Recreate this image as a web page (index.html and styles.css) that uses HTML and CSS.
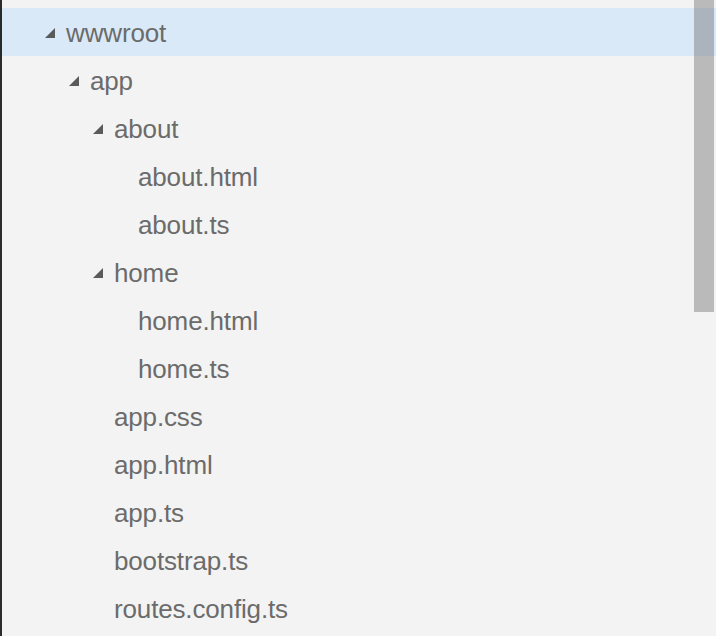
FILE: index.html
```html
<!DOCTYPE html>
<html>
<head>
<meta charset="utf-8">
<link rel="stylesheet" href="styles.css">
</head>
<body>
<div class="explorer">
  <div class="tree">
    <div class="row selected lvl0"><span class="twistie"><svg viewBox="0 0 10 10" width="10" height="10"><polygon points="10,0 10,10 0,10"/></svg></span><span class="label">wwwroot</span></div>
    <div class="row lvl1"><span class="twistie"><svg viewBox="0 0 10 10" width="10" height="10"><polygon points="10,0 10,10 0,10"/></svg></span><span class="label">app</span></div>
    <div class="row lvl2"><span class="twistie"><svg viewBox="0 0 10 10" width="10" height="10"><polygon points="10,0 10,10 0,10"/></svg></span><span class="label">about</span></div>
    <div class="row lvl3"><span class="twistie"></span><span class="label">about.html</span></div>
    <div class="row lvl3"><span class="twistie"></span><span class="label">about.ts</span></div>
    <div class="row lvl2"><span class="twistie"><svg viewBox="0 0 10 10" width="10" height="10"><polygon points="10,0 10,10 0,10"/></svg></span><span class="label">home</span></div>
    <div class="row lvl3"><span class="twistie"></span><span class="label">home.html</span></div>
    <div class="row lvl3"><span class="twistie"></span><span class="label">home.ts</span></div>
    <div class="row lvl2"><span class="twistie"></span><span class="label">app.css</span></div>
    <div class="row lvl2"><span class="twistie"></span><span class="label">app.html</span></div>
    <div class="row lvl2"><span class="twistie"></span><span class="label">app.ts</span></div>
    <div class="row lvl2"><span class="twistie"></span><span class="label">bootstrap.ts</span></div>
    <div class="row lvl2"><span class="twistie"></span><span class="label">routes.config.ts</span></div>
  </div>
  <div class="scrollbar"></div>
</div>
</body>
</html>
```
FILE: styles.css
```css
html, body {
  margin: 0;
  padding: 0;
  background: #f3f3f3;
}
.explorer {
  position: relative;
  width: 716px;
  height: 636px;
  box-sizing: border-box;
  border-left: 2px solid #2b2b2b;
  background: #f3f3f3;
  padding-top: 8px;
  overflow: hidden;
  font-family: "Liberation Sans", Arial, sans-serif;
}
.tree {
  display: flex;
  flex-direction: column;
}
.row {
  display: flex;
  align-items: center;
  height: 48px;
  color: #6b6b6b;
  font-size: 26px;
  letter-spacing: -0.15px;
}
.row.selected {
  background: #dae9f8;
}
.lvl0 { padding-left: 43px; }
.lvl1 { padding-left: 67px; }
.lvl2 { padding-left: 91px; }
.lvl3 { padding-left: 115px; }
.twistie {
  width: 10px;
  height: 10px;
  margin-right: 11px;
  display: flex;
  margin-top: 1px;
}
.twistie svg {
  fill: #5a5a5a;
}
.label {
  line-height: 48px;
  padding-top: 2px;
}
.scrollbar {
  position: absolute;
  top: 0;
  right: 2px;
  width: 20px;
  height: 312px;
  background: rgba(100, 100, 100, 0.4);
}
```
